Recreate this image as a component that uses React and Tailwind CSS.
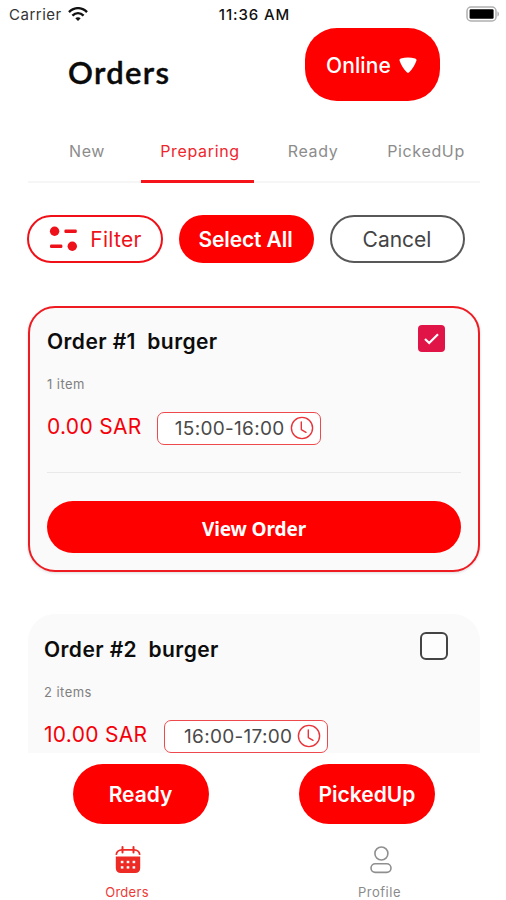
const tabs = ['New', 'Preparing', 'Ready', 'PickedUp'];

function WifiIcon() {
  return (
    <svg width="20" height="14" viewBox="0 0 20 14" fill="none" stroke="#111" strokeWidth="2.4">
      <path d="M1 5.2C6.2-.2 13.8-.2 19 5.2" />
      <path d="M4.4 8.6c3.3-3.2 7.9-3.2 11.2 0" />
      <path d="M10 13.9 7.3 11.3c1.5-1.4 3.9-1.4 5.4 0Z" fill="#111" stroke="none" />
    </svg>
  );
}

function BatteryIcon() {
  return (
    <svg width="34" height="16" viewBox="0 0 34 16">
      <rect x="1" y="1" width="29" height="14" rx="4" fill="#fff" stroke="#b0b0b0" strokeWidth="1.5" />
      <rect x="3.6" y="3.3" width="24" height="9.4" rx="1.2" fill="#000" />
      <path d="M31.5 5.5c1.8.6 1.8 4.4 0 5Z" fill="#a3a3a3" />
    </svg>
  );
}

function FilterIcon() {
  return (
    <svg width="28" height="26" viewBox="0 0 28 26" fill="#ee1119">
      <circle cx="5.6" cy="5.2" r="4.7" />
      <rect x="15.4" y="3.4" width="12.4" height="3.6" rx="1.3" />
      <rect x="1" y="18.4" width="12.4" height="3.6" rx="1.3" />
      <circle cx="23.3" cy="20.2" r="4.7" />
    </svg>
  );
}

function ClockIcon() {
  return (
    <svg width="24" height="24" viewBox="0 0 24 24" fill="none" stroke="#e8343a" strokeWidth="1.4">
      <circle cx="12" cy="12" r="10.6" />
      <path d="M11.3 6v7.6l4.7 2.7" strokeLinecap="round" strokeLinejoin="round" />
    </svg>
  );
}

function CalendarIcon() {
  return (
    <svg width="26" height="28" viewBox="0 0 26 28">
      <path d="M1.2 8.8C1.5 6 4 3.8 6.8 3.8h12.4c2.8 0 5.3 2.2 5.6 5" fill="none" stroke="#ee2a24" strokeWidth="1.7" />
      <path d="M7.5 1v5.5M18.5 1v5.5" stroke="#ee2a24" strokeWidth="2" strokeLinecap="round" />
      <path d="M.8 10.5h24.4V22c0 3.2-2 5-5 5H5.8c-3 0-5-1.8-5-5Z" fill="#ee2a24" />
      <g fill="#fff">
        <rect x="5.8" y="14.8" width="2.6" height="2.4" />
        <rect x="11.7" y="14.8" width="2.6" height="2.4" />
        <rect x="17.6" y="14.8" width="2.6" height="2.4" />
        <rect x="5.8" y="20.2" width="2.6" height="2.4" />
        <rect x="11.7" y="20.2" width="2.6" height="2.4" />
        <rect x="17.6" y="20.2" width="2.6" height="2.4" />
      </g>
    </svg>
  );
}

function ProfileIcon() {
  return (
    <svg width="22" height="28" viewBox="0 0 22 28" fill="none" stroke="#8f8f8f" strokeWidth="1.6">
      <circle cx="11.4" cy="7.5" r="6.5" />
      <rect x="1" y="17.8" width="20" height="8.6" rx="4.3" />
    </svg>
  );
}

function OrderBody({ title, count, price, slot, gap }) {
  return (
    <>
      <div className="flex h-[30px] items-center text-[21px] font-semibold tracking-[0.42px] whitespace-pre text-[#0c0c0c]">{title}</div>
      <div className="mt-[20px] flex h-[16px] items-center text-[13px] tracking-[0.45px] text-[#808080]">{count}</div>
      <div className="mt-[19px] flex h-[34px] items-center">
        <span className="-mt-[3px] text-[21px] tracking-[0.3px] text-[#f50008]">{price}</span>
        <div className={`flex h-[33px] w-[164px] items-center justify-end rounded-[7px] border-[1.5px] border-[#ee4a4e] bg-white pr-[6px] ${gap}`}>
          <span className="text-[19px] tracking-[0.3px] text-[#4a4a4a]">{slot}</span>
          <span className="ml-[5px]"><ClockIcon /></span>
        </div>
      </div>
    </>
  );
}

export default function App() {
  return (
    <div className="flex h-[900px] w-[506px] flex-col overflow-hidden bg-white font-['Inter',sans-serif] leading-none whitespace-nowrap">
      <div className="grid h-[28px] grid-cols-3 items-center pr-[6px] pl-[9px] text-[15px]">
        <div className="flex items-center gap-[6px]">
          <span className="tracking-[0.5px] text-[#333]">Carrier</span>
          <WifiIcon />
        </div>
        <span className="text-center font-medium tracking-[0.9px] text-[#111]">11:36 AM</span>
        <div className="flex justify-end"><BatteryIcon /></div>
      </div>

      <div className="flex h-[73px] items-start justify-between pr-[66px] pl-[68px]">
        <h1 className="pt-[28px] font-['Lato',sans-serif] text-[31px] leading-[32px] font-semibold tracking-[1.3px] text-[#0a0a0a] [-webkit-text-stroke:0.4px_#0a0a0a]">Orders</h1>
        <button className="flex h-[73px] w-[135px] items-center justify-center gap-[8px] rounded-[32px] bg-[#ff0000] pt-px pr-[2px] text-[21px] font-medium tracking-[0.1px] text-white">
          Online
          <svg width="18" height="16" viewBox="0 0 18 16" fill="#fff">
            <path d="M.6 3.8Q0 2.2 1.800 1.5Q9-.6 16.2 1.5Q18 2.2 17.4 3.8Q14.8 11 10.2 15.2Q9 16.2 7.8 15.2Q3.2 11 .6 3.8Z" />
          </svg>
        </button>
      </div>

      <div className="mt-[19px] mr-[26px] ml-[28px] grid h-[63px] grid-cols-4 border-b-2 border-[#f6f6f6]">
        {tabs.map((t) => (
          <div
            key={t}
            className={
              t === 'Preparing'
                ? 'flex h-[63px] items-center justify-center border-b-3 border-[#f5141a] pt-px pl-[5px] text-[16px] tracking-[0.65px] text-[#f0262c]'
                : 'flex h-[63px] items-center justify-center pb-[2px] pl-[5px] text-[16px] tracking-[0.65px] text-[#8c8c8c]'
            }
          >
            {t}
          </div>
        ))}
      </div>

      <div className="mt-[32px] flex h-[48px] gap-[16px] pl-[27px] text-[21px]">
        <button className="flex w-[136px] items-center justify-center gap-[13px] rounded-[24px] border-2 border-[#f01018] pl-px text-[#ee1119]">
          <FilterIcon />
          <span className="font-normal tracking-[0.3px]">Filter</span>
        </button>
        <button className="flex w-[135px] items-center justify-center rounded-[24px] bg-[#ff0000] pr-[2px] font-semibold tracking-[-0.1px] text-white">Select All</button>
        <button className="flex w-[135px] items-center justify-center rounded-[24px] border-2 border-[#585858] pr-px text-[#444]">Cancel</button>
      </div>

      <div className="mt-[43px] h-[447px] overflow-hidden pr-[26px] pl-[28px]">
        <div className="relative h-[266px] rounded-[27px] border-2 border-[#ee1c22] bg-[#fafafa] px-[17px] pt-[18px] shadow-[0_1px_3px_rgba(0,0,0,0.15)]">
          <OrderBody title="Order #1  burger" count="1 item" price="0.00 SAR" slot="15:00-16:00" gap="ml-[15px]" />
          <div className="absolute top-[17px] right-[33px] flex size-[27px] items-center justify-center rounded-[4px] bg-[#e11448]">
            <svg width="15" height="12" viewBox="0 0 15 12" fill="none" stroke="#fff" strokeWidth="2.2"><path d="M1 6l4.2 4L14 1.3" /></svg>
          </div>
          <div className="mt-[27px] h-px bg-[#e9e9e9]" />
          <button className="mt-[28px] flex h-[52px] w-full items-center justify-center rounded-[26px] bg-[#ff0000] pt-[4px] font-['Noto_Sans',sans-serif] text-[19px] font-bold tracking-[-0.1px] text-white">View Order</button>
        </div>

        <div className="relative mt-[42px] h-[266px] rounded-[27px] bg-[#fafafa] px-[16px] pt-[20px]">
          <OrderBody title="Order #2  burger" count="2 items" price="10.00 SAR" slot="16:00-17:00" gap="ml-[17px]" />
          <div className="absolute top-[18px] right-[32px] size-[28px] rounded-[6px] border-2 border-[#444] bg-[#fdfdfd]" />
        </div>
      </div>

      <div className="mt-[11px] flex h-[60px] justify-between pr-[71px] pl-[73px] text-[21px] font-semibold text-white">
        <button className="flex w-[136px] items-center justify-center rounded-[30px] bg-[#ff0000] pt-px pr-px">Ready</button>
        <button className="flex w-[136px] items-center justify-center rounded-[30px] bg-[#ff0000] pt-px">PickedUp</button>
      </div>

      <div className="grid h-[76px] grid-cols-2 pt-[22px] text-[13px]">
        <div className="flex flex-col items-center gap-[12px] pl-[3px] text-[#ee3a36]">
          <CalendarIcon />
          <span className="-ml-[2px] tracking-[0.3px]">Orders</span>
        </div>
        <div className="flex flex-col items-center gap-[12px] pl-[3px] text-[#8a8a8a]">
          <ProfileIcon />
          <span className="-ml-[3px] tracking-[0.5px]">Profile</span>
        </div>
      </div>
    </div>
  );
}
